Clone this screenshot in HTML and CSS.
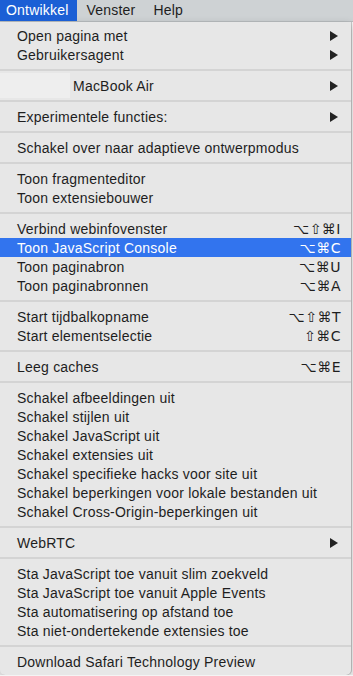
FILE: index.html
```html
<!DOCTYPE html>
<html>
<head>
  <title>Ontwikkel</title>
  <link rel="stylesheet" href="styles.css">
</head>
<body>
  <div class="menubar">
    <div class="menubar-item active">Ontwikkel</div>
    <div class="menubar-item">Venster</div>
    <div class="menubar-item">Help</div>
  </div>

  <div class="menu">
    <div class="item"><span>Open pagina met</span><span class="arrow"></span></div>
    <div class="item"><span>Gebruikersagent</span><span class="arrow"></span></div>
    <div class="sep"></div>
    <div class="item device"><span class="device-blank"></span><span class="device-name">MacBook Air</span><span class="arrow"></span></div>
    <div class="sep"></div>
    <div class="item"><span>Experimentele functies:</span><span class="arrow"></span></div>
    <div class="sep"></div>
    <div class="item"><span>Schakel over naar adaptieve ontwerpmodus</span></div>
    <div class="sep"></div>
    <div class="item"><span>Toon fragmenteditor</span></div>
    <div class="item"><span>Toon extensiebouwer</span></div>
    <div class="sep"></div>
    <div class="item"><span>Verbind webinfovenster</span><span class="keys">⌥⇧⌘I</span></div>
    <div class="item selected"><span>Toon JavaScript Console</span><span class="keys">⌥⌘C</span></div>
    <div class="item"><span>Toon paginabron</span><span class="keys">⌥⌘U</span></div>
    <div class="item"><span>Toon paginabronnen</span><span class="keys">⌥⌘A</span></div>
    <div class="sep"></div>
    <div class="item"><span>Start tijdbalkopname</span><span class="keys">⌥⇧⌘T</span></div>
    <div class="item"><span>Start elementselectie</span><span class="keys">⇧⌘C</span></div>
    <div class="sep"></div>
    <div class="item"><span>Leeg caches</span><span class="keys">⌥⌘E</span></div>
    <div class="sep"></div>
    <div class="item"><span>Schakel afbeeldingen uit</span></div>
    <div class="item"><span>Schakel stijlen uit</span></div>
    <div class="item"><span>Schakel JavaScript uit</span></div>
    <div class="item"><span>Schakel extensies uit</span></div>
    <div class="item"><span>Schakel specifieke hacks voor site uit</span></div>
    <div class="item"><span>Schakel beperkingen voor lokale bestanden uit</span></div>
    <div class="item"><span>Schakel Cross-Origin-beperkingen uit</span></div>
    <div class="sep"></div>
    <div class="item"><span>WebRTC</span><span class="arrow"></span></div>
    <div class="sep"></div>
    <div class="item"><span>Sta JavaScript toe vanuit slim zoekveld</span></div>
    <div class="item"><span>Sta JavaScript toe vanuit Apple Events</span></div>
    <div class="item"><span>Sta automatisering op afstand toe</span></div>
    <div class="item"><span>Sta niet-ondertekende extensies toe</span></div>
    <div class="sep"></div>
    <div class="item"><span>Download Safari Technology Preview</span></div>
  </div>
</body>
</html>
```

FILE: styles.css
```css
body {
  margin: 0;
  background: #f4f4f4;
  font-family: 'Liberation Sans', 'DejaVu Sans', Arial, sans-serif;
  font-size: 14px;
  color: #1e1e1e;
  overflow: hidden;
}
.menubar {
  height: 22px;
  display: flex;
  background: #ced2d4;
  border-bottom: 1px solid #b9bdbf;
  box-sizing: border-box;
}
.menubar-item {
  padding: 0 9px 0 7px;
  line-height: 21px;
  font-size: 14px;
  letter-spacing: 0.2px;
  margin-right: 2px;
}
.menubar-item.active {
  background: #1b5fd5;
  color: #fff;
  padding: 0 9px 0 6px;
}
.menu {
  width: 351px;
  background: #e7e7e7;
  padding: 4px 0;
  border-radius: 0 0 5px 5px;
  box-shadow: 0 3px 8px rgba(0, 0, 0, 0.25), 1px 0 0 #c8c8c8;
}
.item {
  height: 19px;
  display: flex;
  align-items: center;
  justify-content: space-between;
  padding: 0 10px 0 17px;
  letter-spacing: 0.22px;
  white-space: nowrap;
}
.item.selected {
  background: #3274ee;
  color: #fff;
}
.arrow {
  width: 0;
  height: 0;
  border-top: 5px solid transparent;
  border-bottom: 5px solid transparent;
  border-left: 8px solid #222;
  margin-right: 3px;
}
.keys {
  font-family: 'DejaVu Sans', sans-serif;
  font-size: 14px;
  letter-spacing: 0.5px;
}
.device {
  padding-left: 0;
  height: 25px;
  margin: -3px 0;
}
.device-blank {
  width: 70px;
  align-self: stretch;
  background: #eeeeee;
}
.device-name {
  flex: 1;
  padding-left: 3px;
}
.sep {
  height: 12px;
  display: flex;
  align-items: center;
}
.sep::before {
  content: '';
  flex: 1;
  height: 2px;
  background: #d4d4d4;
}
```
